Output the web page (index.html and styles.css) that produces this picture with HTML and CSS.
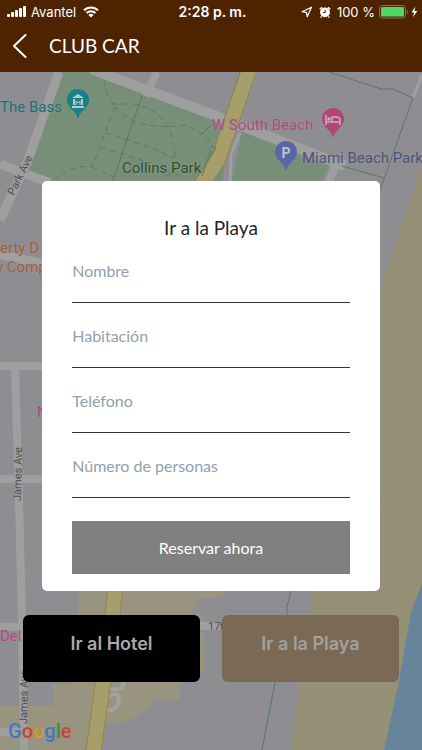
FILE: index.html
```html
<!DOCTYPE html>
<html lang="es">
<head>
<meta charset="utf-8">
<meta name="viewport" content="width=device-width, initial-scale=1">
<title>Club Car</title>
<link rel="stylesheet" href="styles.css">
</head>
<body>
<div class="app">
  <header class="header">
    <div class="status">
      <div class="status-side">
        <svg width="20" height="12" viewBox="0 0 20 12" fill="#fff"><rect x="0" y="8" width="3" height="3" rx="1"/><rect x="4" y="6" width="3" height="5" rx="1"/><rect x="8" y="4" width="3" height="7" rx="1"/><rect x="12" y="2" width="3" height="9" rx="1"/><rect x="16" y="0" width="3" height="11" rx="1"/></svg>
        <span>Avantel</span>
        <svg class="wifi" width="16" height="12" viewBox="0 0 16 12" fill="none" stroke="#fff" stroke-width="2"><path d="M1 4.4a10 10 0 0 1 14 0M3.5 7a6.4 6.4 0 0 1 9 0"/><path d="M8 11.6 5.4 9a3.7 3.7 0 0 1 5.2 0z" fill="#fff" stroke="none"/></svg>
      </div>
      <strong class="clock">2:28 p. m.</strong>
      <div class="status-side status-right">
        <svg width="12" height="12" viewBox="0 0 12 12" fill="none" stroke="#fff" stroke-width="1.2" stroke-linejoin="round"><path d="M10.5 1.2 1 5.7l4.4.7.8 4.3z"/></svg>
        <svg width="12" height="12" viewBox="0 0 12 12"><circle cx="6" cy="6.3" r="4.9" fill="#fff"/><path d="M.8 3.2 3 1.2M11.2 3.2 9 1.2M2.6 10.4l-1 1.1M9.4 10.4l1 1.1" stroke="#fff" stroke-width="1.5"/><path d="M6.2 3.8v2.7H4" fill="none" stroke="#4d2300"/></svg>
        <span>100 %</span>
        <svg width="39" height="14" viewBox="0 0 39 14"><rect x=".5" y=".5" width="26" height="12.5" rx="3" fill="none" stroke="#8f7462"/><rect x="2" y="2" width="23" height="9.5" rx="1.5" fill="#4cd964"/><path d="M28 4.8q2 2 0 4z" fill="#8f7462"/><path d="M36.3 1.5 32.5 7.4h2.6l-1.2 4.8L38.3 6h-2.8z" fill="#fff"/></svg>
      </div>
    </div>
    <div class="nav">
      <button class="back" type="button" aria-label="Atrás"><svg width="14" height="24" viewBox="0 0 14 24" fill="none" stroke="#fff" stroke-width="2" stroke-linecap="round" stroke-linejoin="round"><path d="M12.5 1 1 12l11.5 11"/></svg></button>
      <h1>CLUB CAR</h1>
    </div>
  </header>

  <main class="stage">
    <svg class="map" viewBox="0 72 422 678" preserveAspectRatio="xMidYMin slice" aria-hidden="true">
      <rect y="72" width="422" height="678" fill="#8e8e92"/>
      <!-- beach and sea -->
      <path d="M422 164 381 286V500L313 592 291 750H422z" fill="#969076"/>
      <path d="M422 583 411 612 399 682 384 750H422z" fill="#66859c"/>
      <!-- commercial areas -->
      <path d="M80 580H223V597L203 600 205 672H180V699H153Q139 724 107 724L82 750H0V706H53V684H72z" fill="#99947f"/>
      <path d="M190 615 199 598H223V615z" fill="#8e8e92"/>
      <!-- parks -->
      <path d="M62 72H92L230 121 222 185H48L28 170z" fill="#778f79"/>
      <path d="M211 130 222 134 211 160zM242 132 329 166 320 185H231z" fill="#778f79"/>
      <!-- streets -->
      <g fill="none" stroke="#a09fa0">
        <path d="M91 69 211 114 345 166" stroke-width="10"/>
        <path d="M59 72 28 160 0 220" stroke-width="9"/>
        <path d="M0 164 50 183 M0 255 45 264" stroke-width="9"/>
        <path d="M157 72 145 96M337 160 328 185" stroke-width="8"/>
        <path d="M0 366H44M0 479H44M0 627H30M190 626H220M0 732H22" stroke-width="8"/>
        <path d="M15 368 19 500 22 620 24 750" stroke-width="8"/>
        <path d="M240 133 231 155 230 185M422 75 413 98" stroke-width="3"/>
      </g>
      <path d="M107 680q17-7 17 2 0 9-14 7M107 697q15-8 11 7-3 8-12 5" fill="none" stroke="#a3a2a0" stroke-width="4"/>
      <path d="M248 72 218 160 200 185" fill="none" stroke="#91824e" stroke-width="16"/>
      <path d="M249 70 218 160 200 187" fill="none" stroke="#a69e6b" stroke-width="14"/>
      <path d="M116 580 111 630 102 690 93 755" fill="none" stroke="#9c8145" stroke-width="16"/>
      <path d="M116 580 111 630 102 690 93 755" fill="none" stroke="#a69e6b" stroke-width="14"/>
      <!-- footpaths -->
      <g fill="none" stroke="#5d7a64" stroke-dasharray="6 4">
        <path d="M104 80Q106 96 115 107L92 167Q76 164 56 178M112 104H135Q172 112 175 154V160M115 107Q137 132 185 125 200 130 211 143M105 133Q144 144 174 158M100 147 150 163M92 167 114 177M166 176Q172 171 180 176"/>
      </g>
      <path d="M142 96 113 180M211 125 202 134M211 150 202 176M329 72 381 89H393L413 98 380 190M342 166 384 178M211 146 216 148 211 156M291 591 287 606V620L262 750" fill="none" stroke="#557863"/>
      <!-- place markers -->
      <g transform="translate(78 102)"><path d="M0 17C-2 8-11 6-11-2a11 11 0 0 1 22 0C11 6 2 8 0 17z" fill="#178089"/><path d="M-6-4 0-8 6-4zM-5-3h2v6h-2zM3-3h2v6H3zM-6 4H6v2H-6z" fill="#b4cccd"/><path d="M-2 3v-4L0 1l2-2v4" fill="none" stroke="#b4cccd"/></g>
      <g transform="translate(333 121)"><path d="M0 17C-2 8-11 6-11-2a11 11 0 0 1 22 0C11 6 2 8 0 17z" fill="#b04677"/><path d="M-7-6V4M-7 1H7M7 4V-1Q7-4 3-4H-1V1" fill="none" stroke="#c8b2bd" stroke-width="1.5"/><circle cx="-4" cy="-2" r="1.7" fill="#c8b2bd"/></g>
      <g transform="translate(286 154)"><path d="M0 17C-2 8-11 6-11-2a11 11 0 0 1 22 0C11 6 2 8 0 17z" fill="#5965a4"/><text class="pin-letter" x="0" y="4">P</text></g>
      <!-- labels -->
      <g class="labels">
        <text x="0" y="112" fill="#17707a">The Bass</text>
        <text x="122" y="173" fill="#28532b">Collins Park</text>
        <text x="212" y="130" fill="#b04a7e">W South Beach</text>
        <text x="302" y="163" fill="#4c5379">Miami Beach Park</text>
        <text x="0" y="253" fill="#a35f3c">erty D</text>
        <text x="-4" y="272" fill="#a35f3c">y Comp</text>
        <text x="37" y="417" fill="#b04677">N</text>
        <text x="0" y="641" fill="#b04a7e">Del</text>
      </g>
      <g class="streets">
        <text transform="translate(14 196) rotate(-64)">Park Ave</text>
        <text transform="translate(21 501) rotate(-89)">James Ave</text>
        <text transform="translate(27 724) rotate(-89)">James Ave</text>
        <text x="208" y="630">17t</text>
      </g>
    </svg>

    <form class="modal" role="dialog" aria-labelledby="dialog-title">
      <h2 id="dialog-title">Ir a la Playa</h2>
      <div class="fields">
        <div class="field"><label for="nombre">Nombre</label><input id="nombre" type="text"></div>
        <div class="field"><label for="habitacion">Habitación</label><input id="habitacion" type="text"></div>
        <div class="field"><label for="telefono">Teléfono</label><input id="telefono" type="tel"></div>
        <div class="field"><label for="personas">Número de personas</label><input id="personas" type="text" inputmode="numeric"></div>
      </div>
      <button class="reserve" type="submit">Reservar ahora</button>
    </form>

    <div class="actions">
      <button class="action hotel" type="button">Ir al Hotel</button>
      <button class="action beach" type="button">Ir a la Playa</button>
    </div>

    <div class="google"><span class="blue">G</span><span class="red">o</span><span class="gold">o</span><span class="blue">g</span><span class="green">l</span><span class="red">e</span></div>
  </main>
</div>
</body>
</html>
```
FILE: styles.css
```css
* { box-sizing: border-box; }

body {
  margin: 0;
  font-family: Lato, sans-serif;
}

h1, h2 { margin: 0; font-weight: 400; }

button, input { font-family: inherit; border: 0; padding: 0; }

.app {
  display: flex;
  flex-direction: column;
  min-height: 100vh;
}

.header {
  background: #4d2300;
  color: #fff;
}

.status {
  display: grid;
  grid-template-columns: 1fr auto 1fr;
  align-items: center;
  height: 24px;
  padding: 0 4px 0 7px;
  font: 13px/24px Inter, sans-serif;
}

.status-side {
  display: flex;
  align-items: center;
  gap: 4px;
}

.status-side svg { flex: none; }

.wifi { margin-left: 3px; }

.status-right {
  justify-content: flex-end;
  gap: 6px;
  white-space: nowrap;
}

.status-right span { margin-right: -2px; }

.clock { font-size: 14px; font-weight: 600; }

.nav {
  display: flex;
  align-items: center;
  gap: 22px;
  height: 48px;
  padding: 0 13px 4px;
}

.back {
  display: flex;
  background: none;
}

.nav h1 { font-size: 19px; line-height: 28px; }

.stage {
  position: relative;
  flex: 1;
  display: flex;
  flex-direction: column;
  overflow: hidden;
}

.map {
  position: absolute;
  inset: 0;
  width: 100%;
  height: 100%;
}

.labels {
  font: 15px Roboto, sans-serif;
  stroke: #9a9a9d;
  stroke-width: 2px;
  stroke-opacity: .4;
  paint-order: stroke;
}

.streets {
  font: 11px Roboto, sans-serif;
  fill: #4f4f51;
}

.pin-letter {
  font: 700 14px Roboto, sans-serif;
  fill: #bfc1ce;
  text-anchor: middle;
}

.modal {
  position: relative;
  width: 80%;
  margin: 109px auto 24px;
  padding: 33px 30px 17px;
  border-radius: 5px;
  background: #fff;
}

.modal h2 {
  margin-bottom: 19px;
  color: #20262c;
  font-size: 19px;
  line-height: 28px;
  text-align: center;
}

.fields {
  display: grid;
  gap: 23px;
  margin-bottom: 23px;
}

.field {
  display: flex;
  flex-direction: column;
}

.field label {
  color: #90a1ad;
  font-size: 16px;
  line-height: 20px;
}

.field input {
  width: 100%;
  height: 22px;
  border-bottom: 1px solid #333;
  border-radius: 0;
  background: none;
  font-size: 16px;
}

.reserve {
  display: block;
  width: 100%;
  height: 53px;
  background: #808080;
  color: #fff;
  font-size: 16px;
}

.actions {
  position: relative;
  display: grid;
  grid-template-columns: 1fr 1fr;
  gap: 22px;
  padding: 0 23px;
}

.action {
  height: 67px;
  padding-bottom: 11px;
  border-radius: 6px;
  color: #a9a9a9;
  font: 600 18px Inter, sans-serif;
}

.hotel { background: #000; }

.beach { background: #796955; color: #a3a09d; }

.google {
  position: relative;
  margin-top: auto;
  padding: 0 8px 6px;
  font: 500 20px/26px Roboto, sans-serif;
}

.blue { color: #3f76c9; }
.red { color: #c8443a; }
.gold { color: #cf9e1d; }
.green { color: #34934c; }
```
